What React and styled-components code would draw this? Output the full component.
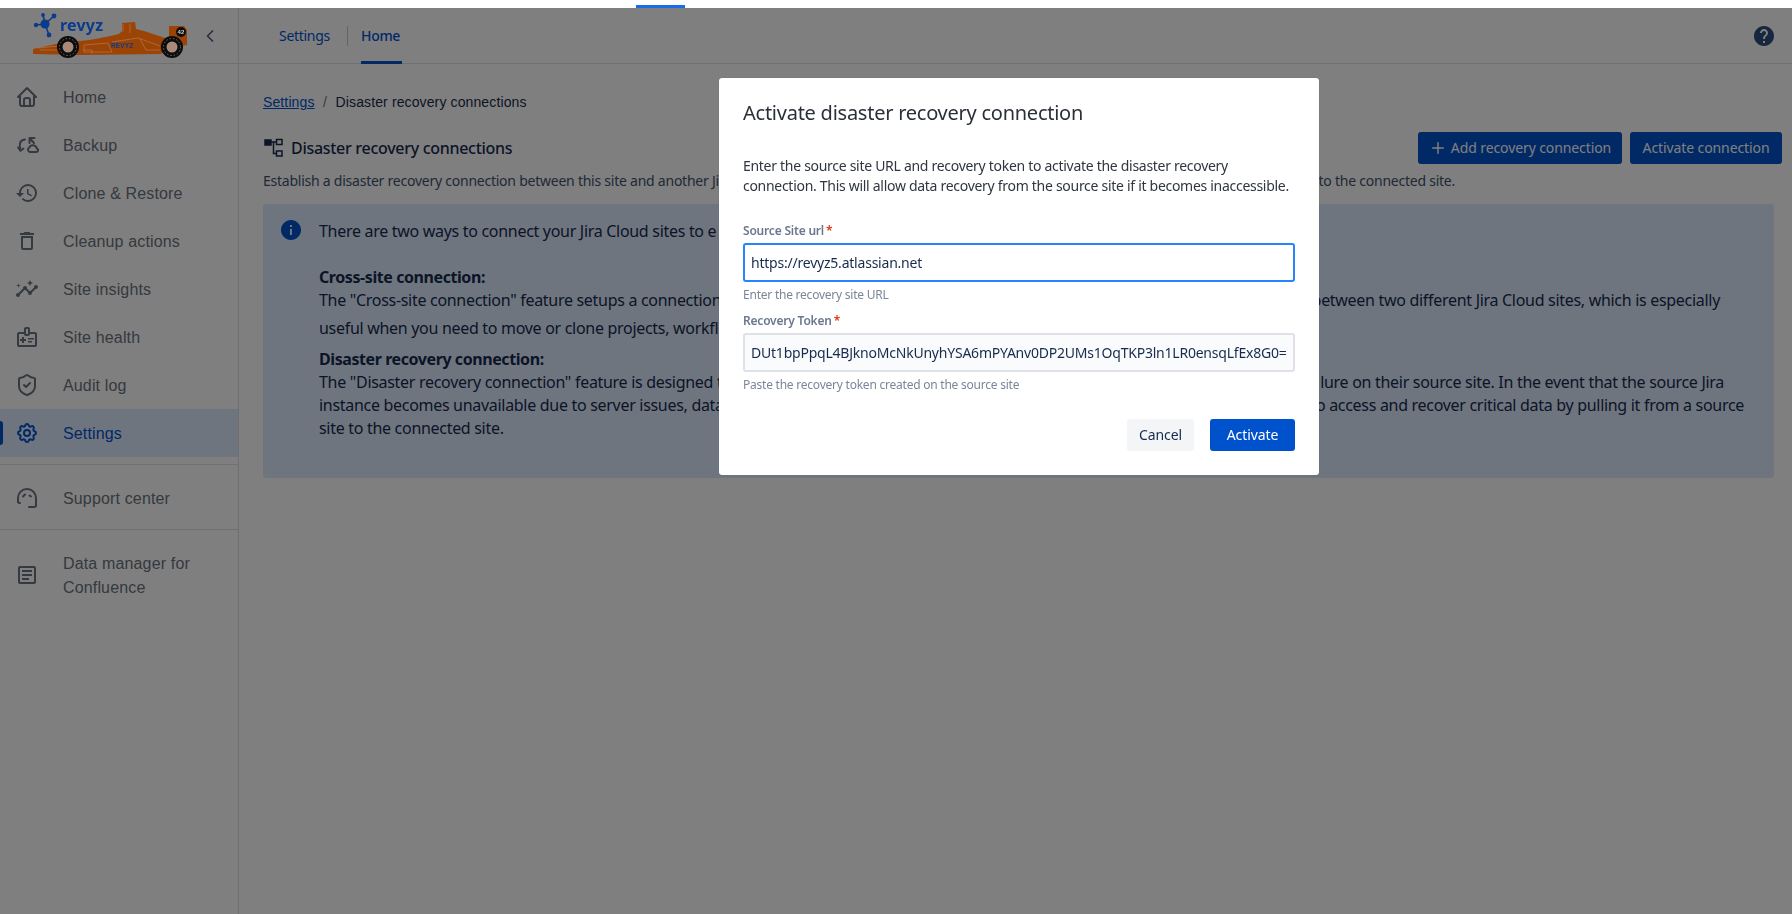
import React from "react";
import styled, { createGlobalStyle } from "styled-components";
import {
  MdHistory,
  MdHelp,
  MdInfo,
  MdOutlineArticle,
  MdOutlineDelete,
  MdOutlineInsights,
  MdOutlineMedicalInformation,
} from "react-icons/md";
import { TbHome, TbSettings } from "react-icons/tb";
import { LuChevronLeft, LuPlus, LuShieldCheck } from "react-icons/lu";

const uiFont = `"Noto Sans", sans-serif`;
const navFont = `"Liberation Sans", Arial, sans-serif`;

const GlobalStyle = createGlobalStyle`
  html, body {
    margin: 0;
    padding: 0;
    height: 100%;
    background: #fff;
    overflow: hidden;
  }
  * {
    box-sizing: border-box;
  }
  body {
    font-family: ${uiFont};
    letter-spacing: -0.29px;
    color: #172b4d;
  }
`;

const TopStrip = styled.div`
  height: 8px;
  display: flex;
  align-items: flex-end;
  padding-left: 636px;
`;

const TopProgress = styled.div`
  width: 49px;
  height: 3px;
  background: #1a6ce8;
`;

const Shell = styled.div`
  display: flex;
  height: 906px;
`;

const Sidebar = styled.aside`
  width: 239px;
  flex-shrink: 0;
  border-right: 1px solid #dfe1e6;
  font-family: ${navFont};
  letter-spacing: 0.15px;
`;

const LogoBar = styled.div`
  height: 56px;
  border-bottom: 1px solid #dfe1e6;
  display: flex;
  align-items: center;
  padding-left: 30px;
`;

const LogoLink = styled.a`
  display: block;
  width: 160px;
  height: 50px;
  position: relative;
  z-index: 3;
`;

const Collapse = styled.button`
  margin-left: 10px;
  padding: 0;
  border: none;
  background: none;
  display: flex;
  font-size: 20px;
  color: #505f79;
`;

const NavGroup = styled.nav`
  padding: ${(p) => p.$padding || "0"};
`;

const NavItem = styled.a`
  position: relative;
  display: flex;
  align-items: center;
  gap: 24px;
  min-height: 48px;
  padding: ${(p) => (p.$tall ? "20px 15px 21px" : "0 15px")};
  font-size: 16px;
  line-height: 24px;
  color: ${(p) => (p.$active ? "#0052cc" : "#6b7280")};
  background: ${(p) => (p.$active ? "#deebff" : "transparent")};

  ${(p) =>
    p.$active &&
    `&::before {
      content: "";
      position: absolute;
      left: 0;
      top: 12px;
      width: 3px;
      height: 24px;
      border-radius: 0 3px 3px 0;
      background: #0052cc;
    }`}
`;

const NavLabel = styled.span`
  padding-top: 2px;
`;

const NavIcon = styled.span`
  width: 24px;
  height: 24px;
  flex-shrink: 0;
  display: flex;
  align-items: center;
  justify-content: center;
  font-size: 24px;
  color: ${(p) => (p.$active ? "#0052cc" : "#6b7280")};
`;

const NavDivider = styled.hr`
  margin: 7px 0 0;
  border: none;
  border-top: 1px solid #dfe1e6;
`;

const Main = styled.main`
  flex: 1;
  min-width: 0;
`;

const TabBar = styled.header`
  height: 56px;
  border-bottom: 1px solid #dfe1e6;
  display: flex;
  align-items: stretch;
  padding: 0 16px 0 40px;
`;

const Tab = styled.a`
  position: relative;
  display: flex;
  align-items: center;
  font-size: 14px;
  color: #0052cc;
  font-weight: ${(p) => (p.$active ? 500 : 400)};

  ${(p) =>
    p.$active &&
    `&::after {
      content: "";
      position: absolute;
      left: 0;
      right: -2px;
      bottom: -1px;
      height: 3px;
      background: #0052cc;
    }`}
`;

const TabSeparator = styled.span`
  align-self: center;
  width: 1px;
  height: 20px;
  margin: 0 13px 0 17px;
  background: #c1c7d0;
`;

const HelpButton = styled.span`
  margin-left: auto;
  align-self: center;
  display: flex;
  font-size: 24px;
  color: #2f4f80;
`;

const Content = styled.section`
  padding: 28px 18px 0 24px;
`;

const Breadcrumbs = styled.div`
  display: flex;
  gap: 8.5px;
  font-family: ${navFont};
  letter-spacing: 0.12px;
  font-size: 14px;
  line-height: 20px;
  color: #172b4d;
`;

const CrumbLink = styled.a`
  color: #0052cc;
  text-decoration: underline;
`;

const CrumbSlash = styled.span`
  color: #6b778c;
`;

const TitleRow = styled.div`
  display: flex;
  align-items: center;
  margin: 20px -8px 0 0;
  height: 32px;
`;

const TitleIcon = styled.svg`
  width: 20px;
  height: 20px;
  margin-left: 1px;
  flex-shrink: 0;
`;

const PageTitle = styled.h1`
  margin: 0 auto 0 7px;
  font-size: 16px;
  font-weight: 500;
  color: #172b4d;
`;

const PrimaryButton = styled.button`
  height: 32px;
  display: inline-flex;
  align-items: center;
  justify-content: center;
  gap: 4px;
  padding: 0 0 1px;
  margin-left: ${(p) => p.$gap || "0"};
  width: ${(p) => p.$width};
  border: none;
  border-radius: 3px;
  background: #0052cc;
  color: #fff;
  font-family: ${uiFont};
  font-size: 14px;
  letter-spacing: -0.1px;
  white-space: nowrap;
`;

const GhostButton = styled(PrimaryButton)`
  background: #f4f5f7;
  color: #172b4d;
`;

const Subtitle = styled.div`
  display: flex;
  justify-content: space-between;
  width: 1192px;
  margin-top: 7px;
  font-size: 14px;
  line-height: 20px;
  letter-spacing: -0.24px;
  white-space: nowrap;
  color: #42526e;
`;

const InfoPanel = styled.div`
  display: flex;
  gap: 18px;
  margin-top: 13px;
  height: 274px;
  padding: 16px 18px;
  border-radius: 3px;
  background: #deebff;
`;

const InfoIcon = styled.span`
  width: 20px;
  height: 20px;
  flex-shrink: 0;
  display: flex;
  align-items: center;
  justify-content: center;
  font-size: 24px;
  color: #0052cc;

  svg {
    flex-shrink: 0;
  }
`;

const InfoBody = styled.div`
  font-size: 16px;
  line-height: 23px;
  letter-spacing: -0.3px;
  color: #172b4d;
  white-space: nowrap;
`;

const InfoLine = styled.div`
  display: flex;
  justify-content: space-between;
  width: ${(p) => p.$width || "auto"};
  margin-top: ${(p) => p.$top || "0"};
`;

const InfoHeading = styled.div`
  font-weight: 700;
  letter-spacing: -0.42px;
  margin-top: ${(p) => p.$top || "0"};
`;

const Overlay = styled.div`
  position: fixed;
  inset: 8px 0 0 0;
  z-index: 2;
  padding: 70px 0 0 719px;
  background: rgba(0, 0, 0, 0.5);
`;

const Modal = styled.div`
  width: 600px;
  height: 397px;
  padding: 23px 24px 0;
  border-radius: 3px;
  background: #fff;
  box-shadow: 0 0 1px rgba(9, 30, 66, 0.31);
`;

const ModalTitle = styled.h2`
  margin: 0;
  font-size: 20px;
  line-height: 24px;
  font-weight: 400;
  letter-spacing: -0.25px;
  color: #2a2f38;
`;

const ModalText = styled.p`
  margin: 31px 0 0;
  font-size: 14px;
  line-height: 20px;
  color: #2f3640;
  white-space: nowrap;
`;

const Field = styled.div`
  margin-top: ${(p) => p.$top};
`;

const Label = styled.label`
  display: block;
  font-size: 12px;
  line-height: 16px;
  font-weight: 600;
  letter-spacing: -0.2px;
  color: #6b778c;
  margin-bottom: 4px;
`;

const Required = styled.span`
  color: #de350b;
  margin-left: 2px;
`;

const TextInput = styled.input`
  display: block;
  width: 100%;
  height: 39px;
  padding: 0 6px;
  border: 2px solid ${(p) => (p.$focused ? "#2684ff" : "#dfe1e6")};
  border-radius: 3px;
  background: ${(p) => (p.$focused ? "#fff" : "#fafbfc")};
  font-family: ${uiFont};
  font-size: 14px;
  letter-spacing: -0.22px;
  color: #172b4d;
  outline: none;
`;

const Hint = styled.div`
  margin-top: 5px;
  font-size: 12px;
  line-height: 16px;
  letter-spacing: -0.23px;
  color: #7a869a;
`;

const ModalActions = styled.div`
  display: flex;
  justify-content: flex-end;
  gap: 16px;
  margin-top: 26px;
`;

function BackupIcon() {
  return (
    <svg width="24" height="24" viewBox="0 0 24 24" fill="none" stroke="currentColor" strokeWidth="2" strokeLinecap="round" strokeLinejoin="round">
      <path d="M10 6.5C6.5 7 4.5 9.5 4.8 13l.7 4.5" />
      <path d="M3 14.5l2.5 3.2 3-2.2" />
      <path d="M14.5 10V5h5M14.5 5l4.5 5" />
      <path d="M15 19h6.5a1.8 1.8 0 0 0 .3-3.5 4 4 0 0 0-7.6-.8A2.3 2.3 0 0 0 15 19z" />
    </svg>
  );
}

function SupportIcon() {
  return (
    <svg width="24" height="24" viewBox="0 0 24 24" fill="none" stroke="currentColor" strokeWidth="2" strokeLinecap="round" strokeLinejoin="round">
      <path d="M3 16v-4a9 9 0 0 1 18 0v7a2 2 0 0 1-2 2h-5" />
      <path d="M3 16a2 2 0 0 0 2 1" />
      <path d="M8 10.5l2-2M16 10.5l-1.5-1" />
    </svg>
  );
}

function CarLogo() {
  return (
    <svg width="160" height="50" viewBox="30 11 160 50">
      <g stroke="#0b3b8c" strokeWidth="1.6">
        <line x1="45" y1="24" x2="54" y2="16" />
        <line x1="45" y1="24" x2="43" y2="15" />
        <line x1="45" y1="24" x2="36" y2="25" />
        <line x1="45" y1="24" x2="49" y2="35" />
      </g>
      <g fill="#0b3b8c">
        <circle cx="45" cy="24" r="4.6" />
        <circle cx="54" cy="16" r="2.4" />
        <circle cx="43" cy="15" r="1.9" />
        <circle cx="36" cy="25" r="2.2" />
        <circle cx="49" cy="35" r="2.4" />
      </g>
      <text x="60" y="31" fontFamily="'Noto Sans', sans-serif" fontSize="16" fontWeight="700" fill="#0b3b8c" letterSpacing="0.2">
        revyz
      </text>
      <path
        d="M33 54V49L56 44L80 41C92 40 106 37 119 34L122 31V23L135 22L136 29C146 31 158 36 169 39V26H184L187 30V45L180 46L160 54L80 55Z"
        fill="#9c4406"
      />
      <g stroke="#b5764a" strokeWidth="0.7" fill="none">
        <path d="M40 50H60M84 45L108 43L112 52H84ZM112 42L138 38L160 46M123 24V32M130 24V33M83 50H92V54M140 39L146 50H160" />
        <path d="M38 48L58 46" />
      </g>
      <text x="111" y="48" fontFamily="'Liberation Sans', sans-serif" fontSize="6.5" fontWeight="700" fill="#0b3b8c">
        REVYZ
      </text>
      <g>
        <circle cx="68" cy="47" r="11" fill="#0c0c0c" />
        <circle cx="68" cy="47" r="8.5" fill="none" stroke="#777" strokeWidth="1" strokeDasharray="1.4 2" />
        <circle cx="68" cy="47" r="5.5" fill="#a98a78" />
        <circle cx="172" cy="47" r="11" fill="#0c0c0c" />
        <circle cx="172" cy="47" r="8.5" fill="none" stroke="#777" strokeWidth="1" strokeDasharray="1.4 2" />
        <circle cx="172" cy="47" r="5.5" fill="#a98a78" />
      </g>
      <circle cx="181" cy="32" r="5" fill="#0c0c0c" />
      <text x="181" y="34.2" textAnchor="middle" fontFamily="'Liberation Sans', sans-serif" fontSize="6" fontWeight="700" fill="#ccc">
        42
      </text>
    </svg>
  );
}

const navItems = [
  { label: "Home", icon: <TbHome /> },
  { label: "Backup", icon: <BackupIcon /> },
  { label: "Clone & Restore", icon: <MdHistory /> },
  { label: "Cleanup actions", icon: <MdOutlineDelete /> },
  { label: "Site insights", icon: <MdOutlineInsights /> },
  { label: "Site health", icon: <MdOutlineMedicalInformation /> },
  { label: "Audit log", icon: <LuShieldCheck /> },
  { label: "Settings", icon: <TbSettings />, active: true },
];

const App = () => {
  return (
    <>
      <GlobalStyle />
      <TopStrip>
        <TopProgress />
      </TopStrip>
      <Shell>
        <Sidebar>
          <LogoBar>
            <LogoLink>
              <CarLogo />
            </LogoLink>
            <Collapse>
              <LuChevronLeft />
            </Collapse>
          </LogoBar>
          <NavGroup $padding="9px 0 0">
            {navItems.map((item) => (
              <NavItem key={item.label} $active={item.active}>
                <NavIcon $active={item.active}>{item.icon}</NavIcon>
                <NavLabel>{item.label}</NavLabel>
              </NavItem>
            ))}
          </NavGroup>
          <NavDivider />
          <NavGroup $padding="9px 0 0">
            <NavItem>
              <NavIcon>
                <SupportIcon />
              </NavIcon>
              <NavLabel>Support center</NavLabel>
            </NavItem>
          </NavGroup>
          <NavDivider />
          <NavItem $tall>
            <NavIcon>
              <MdOutlineArticle />
            </NavIcon>
            <NavLabel>
              Data manager for
              <br />
              Confluence
            </NavLabel>
          </NavItem>
        </Sidebar>
        <Main>
          <TabBar>
            <Tab>Settings</Tab>
            <TabSeparator />
            <Tab $active>Home</Tab>
            <HelpButton>
              <MdHelp />
            </HelpButton>
          </TabBar>
          <Content>
            <Breadcrumbs>
              <CrumbLink>Settings</CrumbLink>
              <CrumbSlash>/</CrumbSlash>
              <span>Disaster recovery connections</span>
            </Breadcrumbs>
            <TitleRow>
              <TitleIcon viewBox="0 0 20 20" fill="none" stroke="#172b4d" strokeWidth="1.5">
                <rect x="1" y="2" width="6" height="5" fill="#172b4d" />
                <rect x="12.5" y="1.5" width="5.5" height="5" />
                <rect x="12.5" y="13" width="5.5" height="5" />
                <path d="M7 4H12.5M9.5 4V15.5H12.5" />
              </TitleIcon>
              <PageTitle>Disaster recovery connections</PageTitle>
              <PrimaryButton $width="204px">
                <LuPlus size={18} />
                Add recovery connection
              </PrimaryButton>
              <PrimaryButton $width="152px" $gap="8px">
                Activate connection
              </PrimaryButton>
            </TitleRow>
            <Subtitle>
              <span>Establish a disaster recovery connection between this site and another Ji</span>
              <span>to the connected site.</span>
            </Subtitle>
            <InfoPanel>
              <InfoIcon>
                <MdInfo />
              </InfoIcon>
              <InfoBody>
                <div>There are two ways to connect your Jira Cloud sites to e</div>
                <InfoHeading $top="23px">Cross-site connection:</InfoHeading>
                <InfoLine $width="1401px">
                  <span>The "Cross-site connection" feature setups a connection</span>
                  <span>between two different Jira Cloud sites, which is especially</span>
                </InfoLine>
                <InfoLine $top="5px">
                  <span>useful when you need to move or clone projects, workflo</span>
                </InfoLine>
                <InfoHeading $top="8px">Disaster recovery connection:</InfoHeading>
                <InfoLine $width="1405px">
                  <span>The "Disaster recovery connection" feature is designed t</span>
                  <span>lure on their source site. In the event that the source Jira</span>
                </InfoLine>
                <InfoLine $width="1425px">
                  <span>instance becomes unavailable due to server issues, data</span>
                  <span>to access and recover critical data by pulling it from a source</span>
                </InfoLine>
                <div>site to the connected site.</div>
              </InfoBody>
            </InfoPanel>
          </Content>
        </Main>
      </Shell>
      <Overlay>
        <Modal>
          <ModalTitle>Activate disaster recovery connection</ModalTitle>
          <ModalText>
            Enter the source site URL and recovery token to activate the disaster recovery
            <br />
            connection. This will allow data recovery from the source site if it becomes inaccessible.
          </ModalText>
          <Field $top="27px">
            <Label>
              Source Site url<Required>*</Required>
            </Label>
            <TextInput $focused readOnly value="https://revyz5.atlassian.net" />
            <Hint>Enter the recovery site URL</Hint>
          </Field>
          <Field $top="10px">
            <Label>
              Recovery Token<Required>*</Required>
            </Label>
            <TextInput readOnly value="DUt1bpPpqL4BJknoMcNkUnyhYSA6mPYAnv0DP2UMs1OqTKP3ln1LR0ensqLfEx8G0=" />
            <Hint>Paste the recovery token created on the source site</Hint>
          </Field>
          <ModalActions>
            <GhostButton $width="67px">Cancel</GhostButton>
            <PrimaryButton $width="85px">Activate</PrimaryButton>
          </ModalActions>
        </Modal>
      </Overlay>
    </>
  );
};

export default App;
